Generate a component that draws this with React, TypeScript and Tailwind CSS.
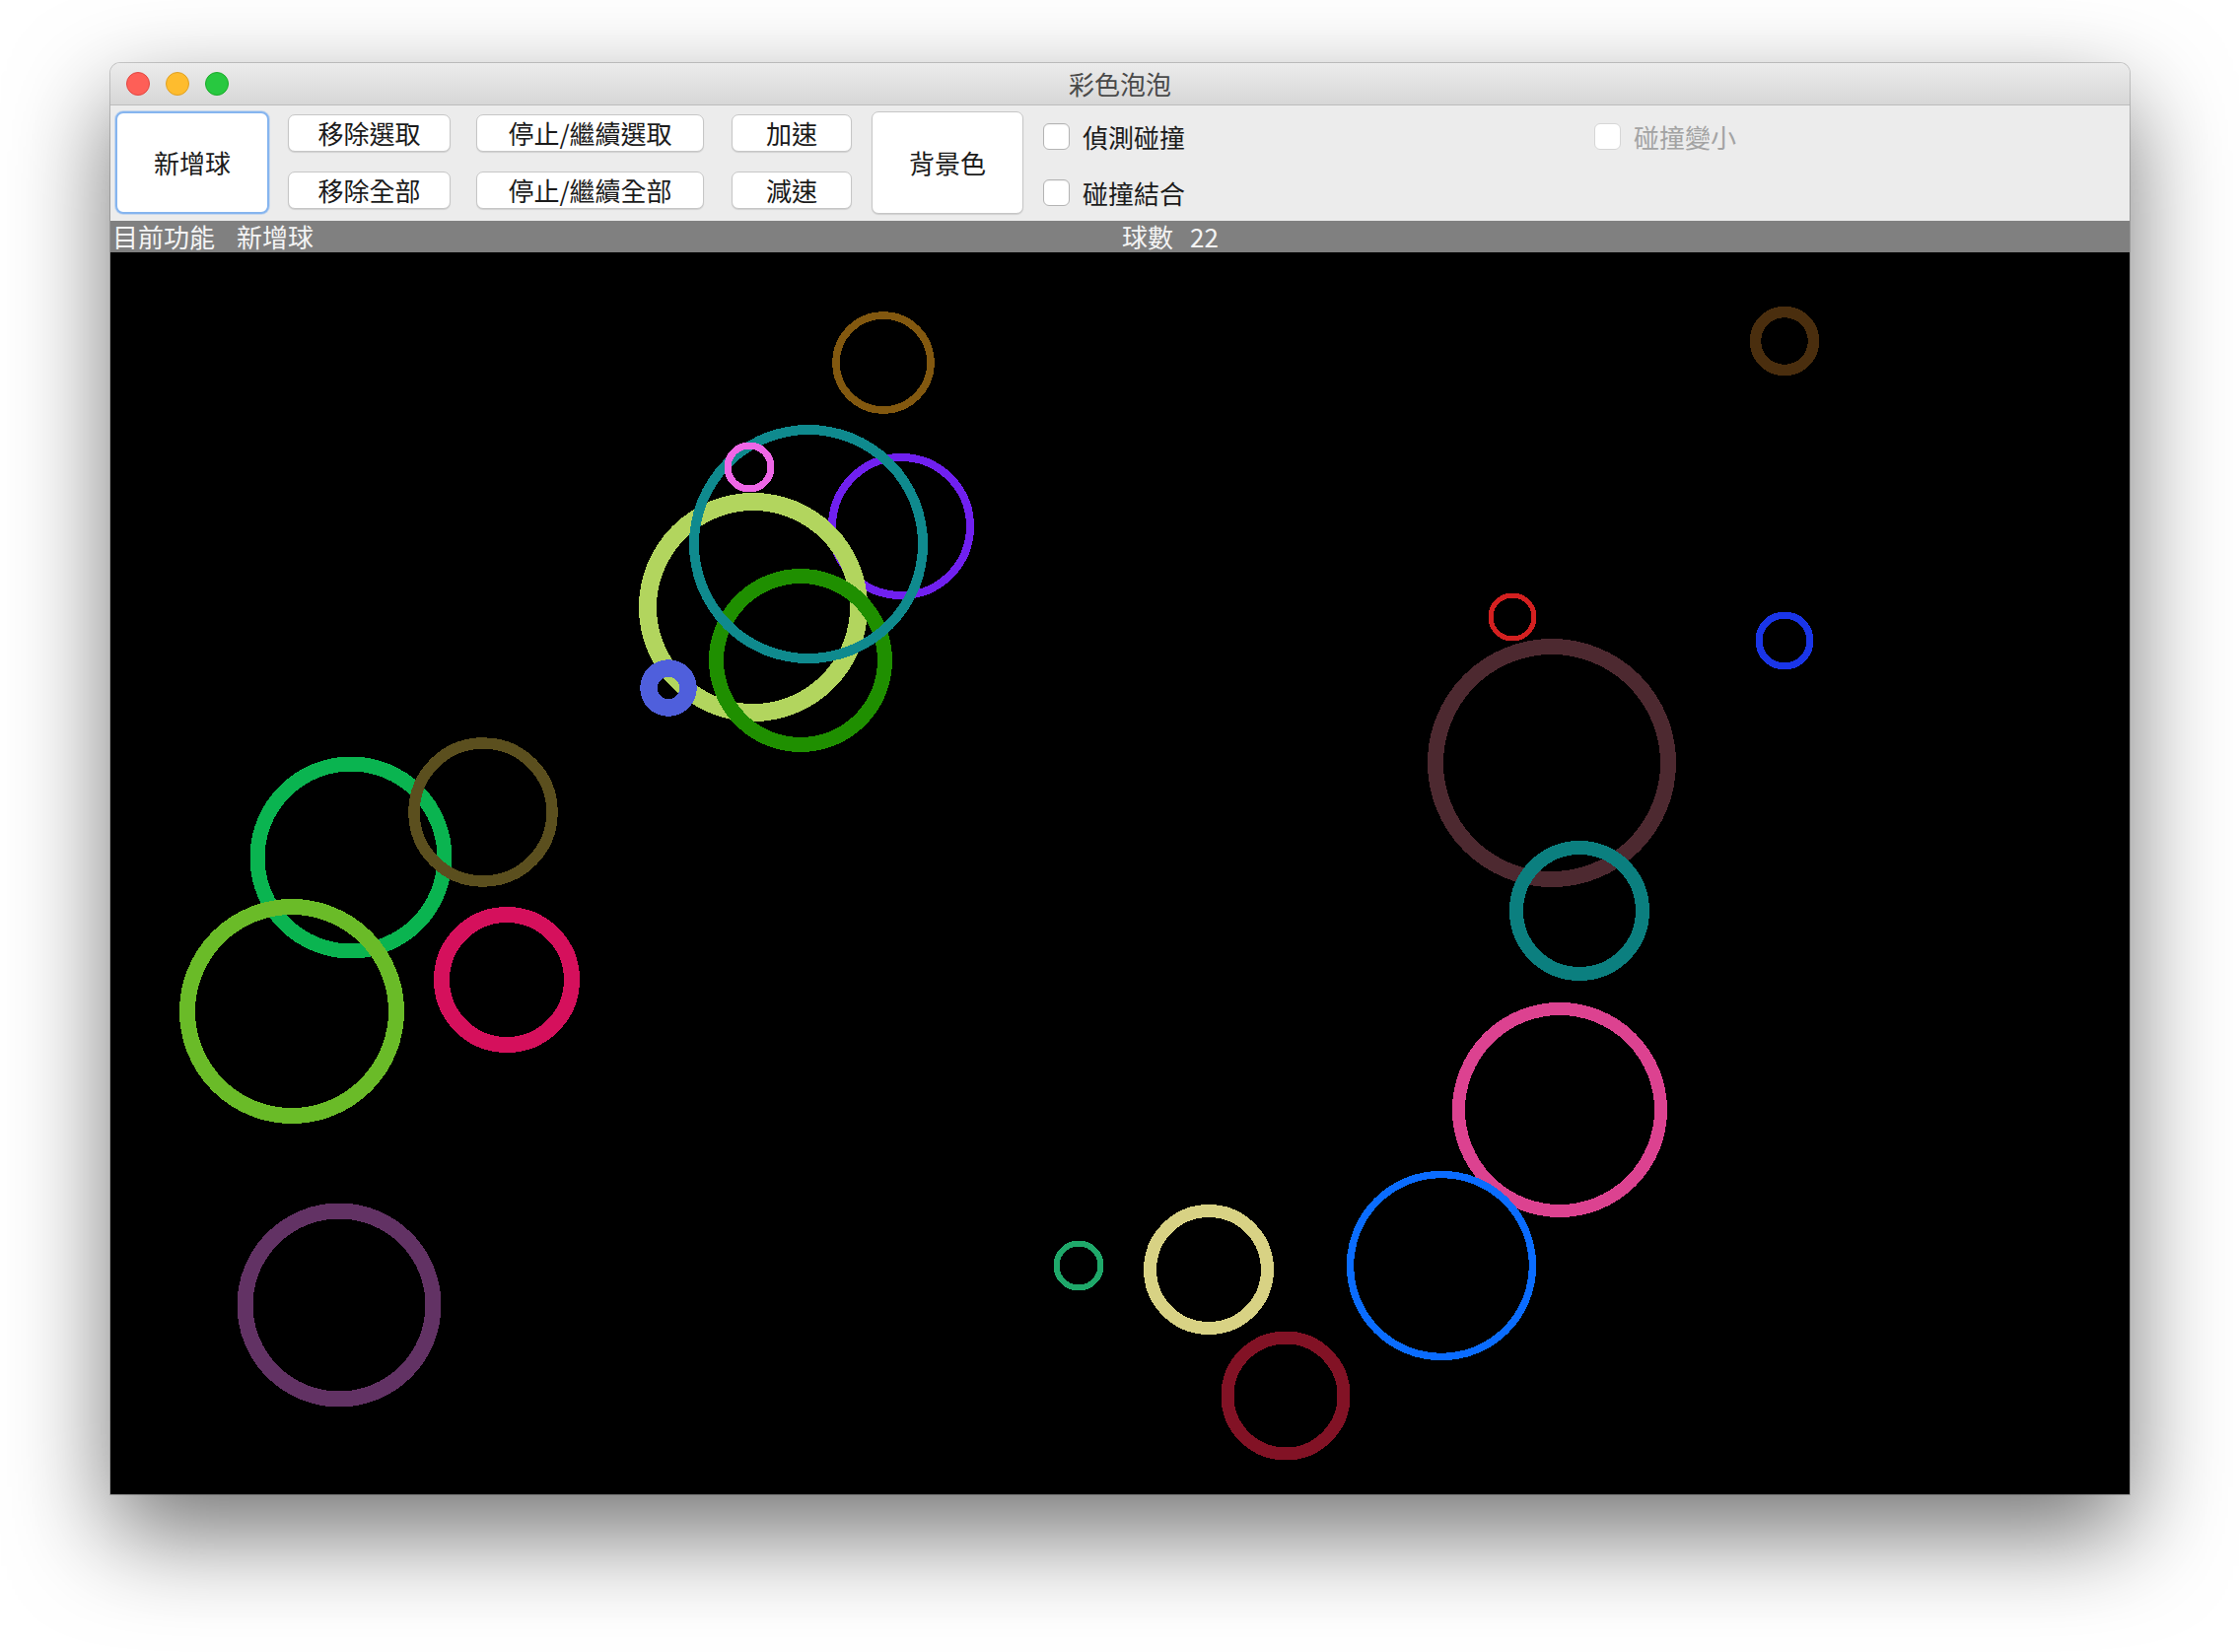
import React from 'react';

interface Bubble {
  x: number;
  y: number;
  r: number;
  w: number;
  color: string;
}

// canvas coordinates, drawn in order (last on top)
const bubbles: Bubble[] = [
  { x: 784, y: 112, r: 48, w: 7.5, color: '#82580f' },
  { x: 1698, y: 90, r: 29.5, w: 11.5, color: '#4a2e0e' },
  { x: 802, y: 278, r: 70, w: 8, color: '#7020f0' },
  { x: 652, y: 360, r: 107, w: 18, color: '#b2d55e' },
  { x: 700, y: 414, r: 85.5, w: 15, color: '#1f8f00' },
  { x: 708, y: 296, r: 116, w: 10, color: '#0f8a8e' },
  { x: 648, y: 218, r: 22, w: 7, color: '#ee66e6' },
  { x: 566, y: 442, r: 20, w: 17.5, color: '#4f5fdc' },
  { x: 1422, y: 370, r: 22, w: 5, color: '#d42020' },
  { x: 1698, y: 394, r: 26, w: 7, color: '#1a35e8' },
  { x: 1462, y: 518, r: 118, w: 16, color: '#4d2930' },
  { x: 1490, y: 668, r: 64, w: 14, color: '#0b7f7f' },
  { x: 244, y: 614, r: 95, w: 15, color: '#0ab450' },
  { x: 378, y: 568, r: 70, w: 11.5, color: '#5b4f1e' },
  { x: 184, y: 770, r: 106, w: 16, color: '#6abb28' },
  { x: 402, y: 738, r: 66, w: 16, color: '#d5105c' },
  { x: 1470, y: 870, r: 102.5, w: 13, color: '#dc4290' },
  { x: 1350, y: 1028, r: 92.5, w: 7.5, color: '#0a6cff' },
  { x: 982, y: 1028, r: 22.5, w: 6, color: '#1fa86a' },
  { x: 1114, y: 1032, r: 59.5, w: 13, color: '#d8d284' },
  { x: 1192, y: 1160, r: 59, w: 13, color: '#821225' },
  { x: 232, y: 1068, r: 95.5, w: 16, color: '#623264' },
];

function Btn({ label, className }: { label: string; className: string }) {
  return (
    <button
      className={
        'flex items-center justify-center bg-white border border-[#c6c6c6] rounded-[7px] shadow-[0_1px_1px_rgba(0,0,0,0.12)] text-[26px] leading-none text-[#1b1b1b] ' +
        className
      }
    >
      {label}
    </button>
  );
}

function Check({ label, disabled }: { label: string; disabled?: boolean }) {
  return (
    <label className="flex items-center h-[27px]">
      <span
        className={
          'block w-[27px] h-[27px] rounded-[6px] border bg-white ' +
          (disabled ? 'border-[#d6d6d6] bg-[#f6f6f6]' : 'border-[#b4b4b4] shadow-[inset_0_1px_1px_rgba(0,0,0,0.06)]')
        }
      />
      <span
        className={
          'ml-[13px] text-[26px] leading-none ' + (disabled ? 'text-[#a3a3a3]' : 'text-[#1b1b1b]')
        }
      >
        {label}
      </span>
    </label>
  );
}

export default function App() {
  return (
    <div className="w-[2272px] h-[1676px] bg-white pl-[112px] pt-[64px] font-['Noto_Sans_CJK_TC','Noto_Sans_CJK_SC',sans-serif]">
      <div className="w-[2048px] h-[1452px] flex flex-col rounded-t-[10px] overflow-hidden shadow-[0_40px_100px_rgba(0,0,0,0.55),0_0_0_1px_rgba(0,0,0,0.18)]">
        {/* title bar */}
        <div className="relative h-[43px] shrink-0 flex items-center bg-gradient-to-b from-[#ececec] to-[#d7d7d7] border-b border-[#bdbdbd]">
          <div className="flex items-center gap-[16px] pl-[16px]">
            <span className="block w-[24px] h-[24px] rounded-full bg-[#fe5f57] border border-[#e14640]" />
            <span className="block w-[24px] h-[24px] rounded-full bg-[#febc2e] border border-[#dfa023]" />
            <span className="block w-[24px] h-[24px] rounded-full bg-[#28c840] border border-[#1aab29]" />
          </div>
          <div className="absolute inset-0 flex items-center justify-center text-[26px] leading-none text-[#4a4a4a]">
            彩色泡泡
          </div>
        </div>

        {/* toolbar */}
        <div className="h-[117px] shrink-0 bg-[#ececec] flex items-start pt-[6px] pl-[5px]">
          <button className="w-[156px] h-[104px] flex items-center justify-center bg-white border-2 border-[#86b5ef] rounded-[8px] shadow-[0_0_0_1px_rgba(150,190,240,0.45)] text-[26px] leading-none text-[#1b1b1b]">
            新增球
          </button>
          <div className="ml-[19px] mt-[3px] flex flex-col gap-[20px]">
            <Btn label="移除選取" className="w-[165px] h-[38px]" />
            <Btn label="移除全部" className="w-[165px] h-[38px]" />
          </div>
          <div className="ml-[26px] mt-[3px] flex flex-col gap-[20px]">
            <Btn label="停止/繼續選取" className="w-[231px] h-[38px]" />
            <Btn label="停止/繼續全部" className="w-[231px] h-[38px]" />
          </div>
          <div className="ml-[28px] mt-[3px] flex flex-col gap-[20px]">
            <Btn label="加速" className="w-[122px] h-[38px]" />
            <Btn label="減速" className="w-[122px] h-[38px]" />
          </div>
          <Btn label="背景色" className="ml-[20px] w-[154px] h-[104px]" />
          <div className="ml-[20px] mt-[12px] w-[559px] flex flex-col gap-[30px]">
            <Check label="偵測碰撞" />
            <Check label="碰撞結合" />
          </div>
          <div className="mt-[12px]">
            <Check label="碰撞變小" disabled />
          </div>
        </div>

        {/* status bar */}
        <div className="h-[32px] shrink-0 bg-[#808080] grid grid-cols-2 text-[26px] leading-none text-[#f4f4f4]">
          <div className="flex items-center pl-[2px]">
            <span>目前功能</span>
            <span className="ml-[22px]">新增球</span>
          </div>
          <div className="flex items-center pl-[2px]">
            <span>球數</span>
            <span className="ml-[17px]">22</span>
          </div>
        </div>

        {/* canvas */}
        <div className="flex-1 bg-black">
          <svg width="2048" height="1260" viewBox="0 0 2048 1260" className="block" shapeRendering="crispEdges">
            {bubbles.map((b, i) => (
              <circle key={i} cx={b.x} cy={b.y} r={b.r} fill="none" stroke={b.color} strokeWidth={b.w} />
            ))}
          </svg>
        </div>
      </div>
    </div>
  );
}
